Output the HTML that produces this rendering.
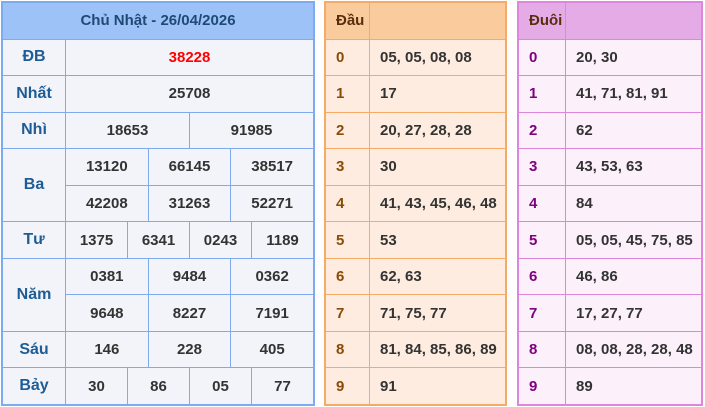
<!DOCTYPE html><html><head><meta charset="utf-8"><style>
body{margin:0;width:705px;height:407px;background:#fff;font-family:"Liberation Sans",Arial,sans-serif;font-weight:bold;font-size:15px;position:relative;overflow:hidden}
.g{position:absolute;top:1px;height:401px;padding:2px;display:grid;gap:1px;grid-template-rows:repeat(11,1fr)}
.g div{display:flex;align-items:center}
#L{left:1px;width:310px;background:#7eaaf0;grid-template-columns:62px repeat(12,1fr)}
#L div{background:#f3f4f9;justify-content:center;color:#333}
#L .h{background:#9dc2f8;color:#1f4a75;grid-column:1/14}
#L .l{color:#1d5c94;font-size:16px}
#M{left:324px;width:179px;background:#f5ab66;grid-template-columns:43px 1fr}
#M div{background:#fdecdf;padding-left:10px;color:#333}
#M div.k{color:#8a4b08}
#M .h{background:#f9cb9d;color:#5a2d0c}
#R{left:517px;width:182px;background:#df86dc;grid-template-columns:46px 1fr}
#R div{background:#fcf0fb;padding-left:10px;color:#333}
#R div.k{color:#800080}
#R .h{background:#e5abe7;color:#5a2d0c}
</style></head><body>
<div class="g" id="L">
<div class="h">Chủ Nhật - 26/04/2026</div>
<div class="l">ĐB</div><div style="grid-column:span 12;color:#f00">38228</div>
<div class="l">Nhất</div><div style="grid-column:span 12">25708</div>
<div class="l">Nhì</div><div style="grid-column:span 6">18653</div><div style="grid-column:span 6">91985</div>
<div class="l" style="grid-row:span 2">Ba</div><div style="grid-column:span 4">13120</div><div style="grid-column:span 4">66145</div><div style="grid-column:span 4">38517</div>
<div style="grid-column:span 4">42208</div><div style="grid-column:span 4">31263</div><div style="grid-column:span 4">52271</div>
<div class="l">Tư</div><div style="grid-column:span 3">1375</div><div style="grid-column:span 3">6341</div><div style="grid-column:span 3">0243</div><div style="grid-column:span 3">1189</div>
<div class="l" style="grid-row:span 2">Năm</div><div style="grid-column:span 4">0381</div><div style="grid-column:span 4">9484</div><div style="grid-column:span 4">0362</div>
<div style="grid-column:span 4">9648</div><div style="grid-column:span 4">8227</div><div style="grid-column:span 4">7191</div>
<div class="l">Sáu</div><div style="grid-column:span 4">146</div><div style="grid-column:span 4">228</div><div style="grid-column:span 4">405</div>
<div class="l">Bảy</div><div style="grid-column:span 3">30</div><div style="grid-column:span 3">86</div><div style="grid-column:span 3">05</div><div style="grid-column:span 3">77</div>
</div>
<div class="g" id="M">
<div class="h">Đầu</div><div class="h"></div>
<div class="k">0</div><div>05, 05, 08, 08</div>
<div class="k">1</div><div>17</div>
<div class="k">2</div><div>20, 27, 28, 28</div>
<div class="k">3</div><div>30</div>
<div class="k">4</div><div>41, 43, 45, 46, 48</div>
<div class="k">5</div><div>53</div>
<div class="k">6</div><div>62, 63</div>
<div class="k">7</div><div>71, 75, 77</div>
<div class="k">8</div><div>81, 84, 85, 86, 89</div>
<div class="k">9</div><div>91</div>
</div>
<div class="g" id="R">
<div class="h">Đuôi</div><div class="h"></div>
<div class="k">0</div><div>20, 30</div>
<div class="k">1</div><div>41, 71, 81, 91</div>
<div class="k">2</div><div>62</div>
<div class="k">3</div><div>43, 53, 63</div>
<div class="k">4</div><div>84</div>
<div class="k">5</div><div>05, 05, 45, 75, 85</div>
<div class="k">6</div><div>46, 86</div>
<div class="k">7</div><div>17, 27, 77</div>
<div class="k">8</div><div>08, 08, 28, 28, 48</div>
<div class="k">9</div><div>89</div>
</div>
</body></html>
